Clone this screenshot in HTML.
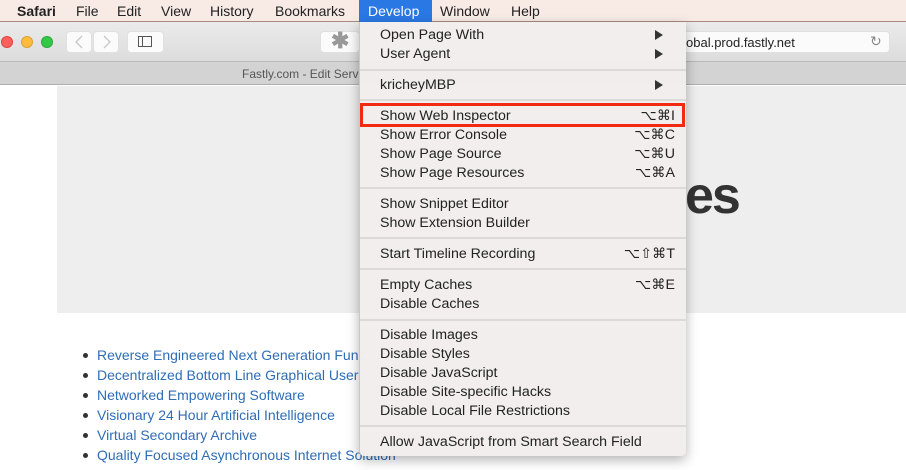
<!DOCTYPE html>
<html><head><meta charset="utf-8"><style>
*{margin:0;padding:0;box-sizing:border-box}
body{width:906px;height:470px;overflow:hidden;position:relative;background:#fff;font-family:"Liberation Sans",sans-serif;}
.mb{position:absolute;left:0;top:0;width:906px;height:22px;background:#f8ebe6;border-bottom:1px solid #a98a82;font-size:14px;color:#222}
.mb span{position:absolute;top:3px}
.tb{position:absolute;left:0;top:22px;width:906px;height:40px;background:linear-gradient(#ebebeb,#dcdcdc);border-bottom:1px solid #b9b9b9}
.dot{position:absolute;top:36px;width:12px;height:12px;border-radius:50%}
.btn{position:absolute;background:#fbfbfb;border-radius:4px;border:1px solid #e0e0e0}
.title{position:absolute;left:0;top:62px;width:906px;height:23px;background:#d3d3d3;border-bottom:1px solid #adadad;font-size:12px;color:#555}
.hero{position:absolute;left:57px;top:86px;width:849px;height:227px;background:#eeeeee}
.es{position:absolute;left:685px;top:166px;font-size:52px;font-weight:bold;color:#333;letter-spacing:-2px}
ul{position:absolute;left:97px;top:345px;list-style:none;font-size:14px;color:#2f6db5}
ul li{height:20px;line-height:20px;position:relative}
ul li:before{content:"";position:absolute;left:-14px;top:8px;width:5px;height:5px;border-radius:50%;background:#333}
.menu{position:absolute;left:359px;top:22px;width:327px;height:434px;background:rgba(242,238,237,0.98);box-shadow:0 4px 12px rgba(0,0,0,0.3);border-radius:0 0 5px 5px;border-left:1px solid #c8c8c8;font-size:14.2px;color:#222}
.it{position:absolute;left:20px;height:19px;line-height:19px;width:295px;margin-top:1px}
.it b{position:absolute;right:0;top:0;font-weight:normal}
.sep{position:absolute;left:0;width:326px;height:2px;background:#dcd9d8}
.arr{position:absolute;right:12px;top:4px;width:0;height:0;border-left:8px solid #333;border-top:5px solid transparent;border-bottom:5px solid transparent}
</style></head><body>
<div class="mb">
<span style="left:17px;font-weight:bold">Safari</span>
<span style="left:76px">File</span>
<span style="left:117px">Edit</span>
<span style="left:161px">View</span>
<span style="left:210px">History</span>
<span style="left:275px">Bookmarks</span>
<div style="position:absolute;left:359px;top:0;width:73px;height:22px;background:#2a78e4"></div>
<span style="left:368px;color:#fff">Develop</span>
<span style="left:440px">Window</span>
<span style="left:511px">Help</span>
</div>
<div class="tb"></div>
<div class="dot" style="left:1px;background:#fc605c;border:1px solid #e0443e"></div>
<div class="dot" style="left:21px;background:#fdbc40;border:1px solid #dea034"></div>
<div class="dot" style="left:41px;background:#34c84a;border:1px solid #27aa35"></div>
<div class="btn" style="left:66px;top:31px;width:26px;height:22px"></div>
<div class="btn" style="left:93px;top:31px;width:26px;height:22px"></div>
<svg style="position:absolute;left:66px;top:31px" width="54" height="22"><path d="M16 5 L10 11 L16 17 M38 5 L44 11 L38 17" fill="none" stroke="#c8c8c8" stroke-width="1.3"/></svg>
<div class="btn" style="left:127px;top:31px;width:37px;height:22px"></div>
<div style="position:absolute;left:138px;top:36px;width:14px;height:11px;border:1px solid #555"><div style="position:absolute;left:3px;top:0;width:1px;height:9px;background:#555"></div></div>
<div class="btn" style="left:320px;top:31px;width:40px;height:22px"></div>
<div style="position:absolute;left:331px;top:28px;color:#999;font-size:22px;font-weight:bold">&#10033;</div>
<div class="btn" style="left:660px;top:31px;width:230px;height:22px;border-radius:0 4px 4px 0;border-left:none"></div>
<div style="position:absolute;left:686px;top:35px;font-size:13px;color:#222">obal.prod.fastly.net</div>
<div style="position:absolute;left:870px;top:33px;font-size:14px;color:#888">&#8635;</div>
<div class="title"><span style="position:absolute;left:242px;top:5px">Fastly.com - Edit Serv</span></div>
<div class="hero"></div>
<div class="es">es</div>
<ul>
<li>Reverse Engineered Next Generation Func</li>
<li>Decentralized Bottom Line Graphical User</li>
<li>Networked Empowering Software</li>
<li>Visionary 24 Hour Artificial Intelligence</li>
<li>Virtual Secondary Archive</li>
<li>Quality Focused Asynchronous Internet Solution</li>
</ul>
<div class="menu">
<div class="it" style="top:3px">Open Page With<i class="arr"></i></div>
<div class="it" style="top:22px">User Agent<i class="arr"></i></div>
<div class="sep" style="top:47px"></div>
<div class="it" style="top:53px">kricheyMBP<i class="arr"></i></div>
<div class="sep" style="top:77px"></div>
<div style="position:absolute;left:0;top:81px;width:325px;height:24px;border:3px solid #f22a12"></div>
<div class="it" style="top:84px">Show Web Inspector<b>⌥⌘I</b></div>
<div class="it" style="top:103px">Show Error Console<b>⌥⌘C</b></div>
<div class="it" style="top:122px">Show Page Source<b>⌥⌘U</b></div>
<div class="it" style="top:141px">Show Page Resources<b>⌥⌘A</b></div>
<div class="sep" style="top:165px"></div>
<div class="it" style="top:172px">Show Snippet Editor</div>
<div class="it" style="top:191px">Show Extension Builder</div>
<div class="sep" style="top:215px"></div>
<div class="it" style="top:222px">Start Timeline Recording<b>⌥⇧⌘T</b></div>
<div class="sep" style="top:246px"></div>
<div class="it" style="top:253px">Empty Caches<b>⌥⌘E</b></div>
<div class="it" style="top:272px">Disable Caches</div>
<div class="sep" style="top:297px"></div>
<div class="it" style="top:303px">Disable Images</div>
<div class="it" style="top:322px">Disable Styles</div>
<div class="it" style="top:341px">Disable JavaScript</div>
<div class="it" style="top:360px">Disable Site-specific Hacks</div>
<div class="it" style="top:379px">Disable Local File Restrictions</div>
<div class="sep" style="top:403px"></div>
<div class="it" style="top:410px">Allow JavaScript from Smart Search Field</div>
</div>
</body></html>
